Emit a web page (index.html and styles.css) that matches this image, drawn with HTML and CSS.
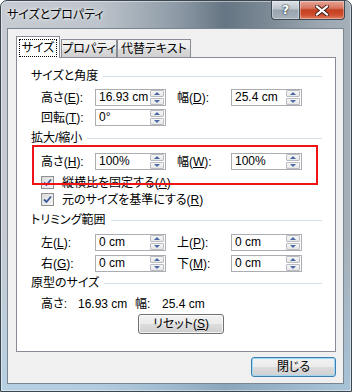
FILE: index.html
```html
<!DOCTYPE html>
<html lang="ja">
<head>
  <meta charset="UTF-8">
  <title>サイズとプロパティ</title>
  <link rel="stylesheet" href="styles.css">
</head>
<body>
  <div class="window">
    <div class="titlebar">
      <span class="title">サイズとプロパティ</span>
      <div class="caps">
        <div class="cap help">?</div>
        <div class="cap close">
          <svg width="14" height="11" viewBox="0 0 14 11"><path d="M2 1.5 L12 9.5 M12 1.5 L2 9.5" stroke="#3a1a14" stroke-width="4" stroke-linecap="square"/><path d="M2 1.5 L12 9.5 M12 1.5 L2 9.5" stroke="#fff" stroke-width="2.2" stroke-linecap="square"/></svg>
        </div>
      </div>
    </div>

    <div class="client">
      <div class="tabs">
        <div class="tab active"><span class="focus">サイズ</span></div>
        <div class="tab t2">プロパティ</div>
        <div class="tab t3">代替テキスト</div>
      </div>

      <div class="panel">
        <div class="group">サイズと角度</div>
        <div class="row r1">
          <label>高さ(<u>E</u>):</label>
          <div class="spin"><span class="val">16.93 cm</span><span class="arrows"><i class="up"></i><i class="down"></i></span></div>
          <label class="l2">幅(<u>D</u>):</label>
          <div class="spin"><span class="val">25.4 cm</span><span class="arrows"><i class="up"></i><i class="down"></i></span></div>
        </div>
        <div class="row r2">
          <label>回転(<u>T</u>):</label>
          <div class="spin"><span class="val">0°</span><span class="arrows"><i class="up"></i><i class="down"></i></span></div>
        </div>

        <div class="group g2">拡大/縮小</div>
        <div class="row r3 mark">
          <label>高さ(<u>H</u>):</label>
          <div class="spin"><span class="val">100%</span><span class="arrows"><i class="up"></i><i class="down"></i></span></div>
          <label class="l2">幅(<u>W</u>):</label>
          <div class="spin"><span class="val">100%</span><span class="arrows"><i class="up"></i><i class="down"></i></span></div>
        </div>
        <div class="check c1">
          <span class="box"><svg width="11" height="11" viewBox="0 0 11 11"><path d="M2 5.5 L4.5 8 L9 2.5" fill="none" stroke="#3b5898" stroke-width="1.8"/></svg></span>
          <span>縦横比を固定する(<u>A</u>)</span>
        </div>
        <div class="check">
          <span class="box"><svg width="11" height="11" viewBox="0 0 11 11"><path d="M2 5.5 L4.5 8 L9 2.5" fill="none" stroke="#3b5898" stroke-width="1.8"/></svg></span>
          <span>元のサイズを基準にする(<u>R</u>)</span>
        </div>

        <div class="group g3">トリミング範囲</div>
        <div class="row r4">
          <label>左(<u>L</u>):</label>
          <div class="spin"><span class="val">0 cm</span><span class="arrows"><i class="up"></i><i class="down"></i></span></div>
          <label class="l2">上(<u>P</u>):</label>
          <div class="spin"><span class="val">0 cm</span><span class="arrows"><i class="up"></i><i class="down"></i></span></div>
        </div>
        <div class="row r5">
          <label>右(<u>G</u>):</label>
          <div class="spin"><span class="val">0 cm</span><span class="arrows"><i class="up"></i><i class="down"></i></span></div>
          <label class="l2">下(<u>M</u>):</label>
          <div class="spin"><span class="val">0 cm</span><span class="arrows"><i class="up"></i><i class="down"></i></span></div>
        </div>

        <div class="group g4">原型のサイズ</div>
        <div class="orig">
          <span class="o1">高さ:</span>
          <span class="o2">16.93 cm</span>
          <span class="o3">幅:</span>
          <span>25.4 cm</span>
        </div>
        <div class="btn reset">リセット(<u>S</u>)</div>
      </div>

      <div class="footer">
        <div class="btn default">閉じる</div>
      </div>
    </div>
  </div>
</body>
</html>
```

FILE: styles.css
```css
* {
  box-sizing: border-box;
}
body {
  margin: 0;
  font-family: "Liberation Sans", "Noto Sans CJK JP", sans-serif;
  font-size: 12px;
  line-height: 14px;
  color: #000;
  font-feature-settings: "palt";
}
u {
  text-decoration: underline;
  text-underline-offset: 1px;
}

/* window frame */
.window {
  width: 352px;
  height: 392px;
  border: 1px solid #3c464f;
  border-radius: 7px 7px 0 0;
  background:
    linear-gradient(to bottom, rgba(255,255,255,0) 60%, rgba(170,210,240,0.55) 100%),
    linear-gradient(to right, #c6ccd2 0%, #bcc3ca 28%, #8e9ba7 50%, #667583 64%, #7b8995 76%, #9aa5af 90%, #a6b0b9 100%);
  box-shadow: inset 0 0 0 1px rgba(255,255,255,0.45);
}
.titlebar {
  display: flex;
  align-items: flex-start;
  height: 27px;
}
.title {
  padding: 7px 0 0 6px;
  font-size: 12px;
  text-shadow: 0 0 6px rgba(255,255,255,0.9), 0 0 3px rgba(255,255,255,0.9);
}
.caps {
  display: flex;
  margin-left: auto;
  margin-right: 6px;
}
.cap {
  height: 19px;
  border: 1px solid #3e4953;
  border-top: none;
  display: flex;
  align-items: center;
  justify-content: center;
  box-shadow: inset 0 0 0 1px rgba(255,255,255,0.35);
}
.help {
  width: 28px;
  border-radius: 0 0 0 4px;
  border-right: none;
  background: linear-gradient(to bottom, #dde2e7 0%, #bcc4cc 45%, #98a3ae 50%, #a8b2bc 100%);
  color: #fff;
  font-family: "DejaVu Sans", sans-serif;
  font-weight: bold;
  font-size: 13px;
  text-shadow: 0 0 2px #1e2830, 0 0 1px #1e2830;
}
.close {
  width: 46px;
  border-radius: 0 0 4px 0;
  background: linear-gradient(to bottom, #e6a595 0%, #d77460 40%, #c4401f 50%, #cd4a2c 75%, #e0805f 100%);
}

/* client area */
.client {
  margin: 0 7px 0 6px;
  height: 356px;
  border: 1px solid #7b8690;
  background: #f0f0f0;
  padding: 7px 7px 0 8px;
}
.tabs {
  display: flex;
  align-items: flex-end;
  height: 21px;
}
.tab {
  height: 18px;
  border: 1px solid #898c95;
  border-bottom: none;
  background: linear-gradient(to bottom, #f3f3f3 0%, #ebebeb 50%, #dddddd 50%, #cfcfcf 100%);
  text-align: center;
  padding-top: 2px;
}
.tab.active {
  position: relative;
  z-index: 1;
  width: 44px;
  height: 22px;
  margin-bottom: -1px;
  background: #fff;
  padding-top: 2px;
}
.focus {
  display: inline-block;
  border: 1px dotted #000;
  padding: 1px 2px 1px 2px;
  line-height: 14px;
}
.t2 {
  width: 56px;
  margin-left: 1px;
}
.t3 {
  width: 74px;
  margin-left: 0;
}
.panel {
  height: 295px;
  border: 1px solid #898c95;
  background: #fff;
  padding: 11px 13px 0 14px;
}

/* groups */
.group {
  display: flex;
  align-items: center;
  gap: 5px;
  height: 14px;
}
.group::after {
  content: "";
  flex: 1;
  height: 1px;
  background: #d5dfe5;
}
.g2 { margin-top: 5px; }
.g3 { margin-top: 5px; }
.g4 { margin-top: 4px; }

.row {
  display: grid;
  grid-template-columns: 54px 71px 65px 71px;
  align-items: center;
  height: 17px;
  margin-left: 10px;
}
.l2 {
  padding-left: 11px;
}
.r1 { margin-top: 6px; }
.r2 { margin-top: 3px; }
.r3 { margin-top: 8px; }
.r4 { margin-top: 7px; }
.r5 { margin-top: 4px; }

.mark {
  position: relative;
}
.mark::after {
  content: "";
  position: absolute;
  left: -9px;
  top: -8px;
  width: 282px;
  height: 36px;
  border: 2px solid #f01414;
}

/* spin boxes */
.spin {
  display: flex;
  height: 17px;
  border: 1px solid #abadb3;
  background: #fff;
}
.val {
  flex: 1;
  padding-left: 3px;
  line-height: 15px;
}
.arrows {
  display: flex;
  flex-direction: column;
  gap: 1px;
  width: 15px;
  padding: 0 1px 0 0;
}
.arrows i {
  flex: 1;
  display: flex;
  align-items: center;
  justify-content: center;
  border: 1px solid #b9bdc3;
  border-radius: 1px;
  background: linear-gradient(to bottom, #f7f7f7 0%, #e6e6e6 100%);
}
.arrows i::after {
  content: "";
  border-left: 3px solid transparent;
  border-right: 3px solid transparent;
}
.up::after {
  border-bottom: 3px solid #4d68a8;
}
.down::after {
  border-top: 3px solid #4d68a8;
}

/* check boxes */
.check {
  display: flex;
  align-items: center;
  gap: 8px;
  height: 17px;
  margin-left: 10px;
}
.c1 { margin-top: 4px; }
.box {
  width: 13px;
  height: 13px;
  border: 1px solid #8e8f8f;
  background: linear-gradient(to bottom right, #dcdcdc 0%, #f6f6f6 100%);
  display: flex;
  align-items: center;
  justify-content: center;
}

/* original size */
.orig {
  display: flex;
  margin: 7px 0 0 10px;
  height: 14px;
}
.o1 { width: 37px; }
.o2 { width: 57px; }
.o3 { width: 27px; }

/* buttons */
.btn {
  height: 20px;
  border: 1px solid #707070;
  border-radius: 3px;
  background: linear-gradient(to bottom, #f2f2f2 0%, #ebebeb 50%, #dddddd 50%, #cfcfcf 100%);
  box-shadow: inset 0 0 0 1px rgba(255,255,255,0.75);
  text-align: center;
  line-height: 18px;
}
.reset {
  width: 86px;
  margin: 3px 0 0 107px;
}
.footer {
  display: flex;
  justify-content: flex-end;
  margin-top: 5px;
}
.default {
  width: 85px;
  border-color: #3c7fb1;
  box-shadow: inset 0 0 0 1px #9fd9f6;
}
```
